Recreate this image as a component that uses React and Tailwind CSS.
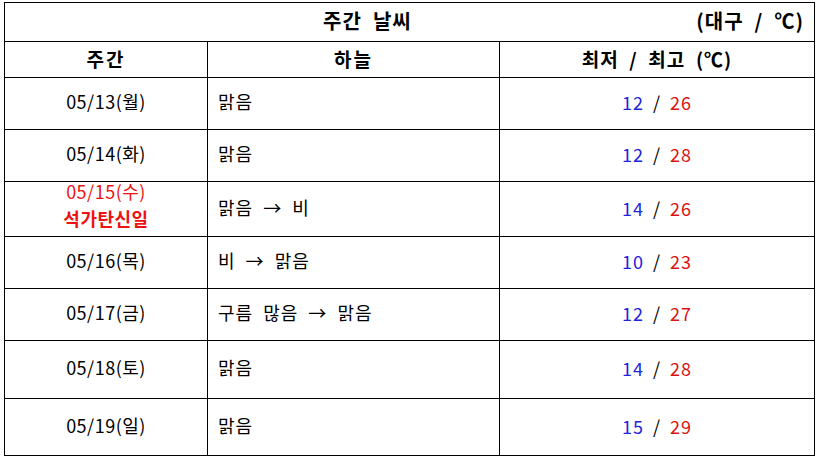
import React from "react";

const rows = [
  { d: "05/13(월)", sky: "맑음", lo: 12, hi: 26, h: "h-[52px]" },
  { d: "05/14(화)", sky: "맑음", lo: 12, hi: 28, h: "h-[52px]" },
  { d: "05/15(수)", sky: "맑음 → 비", lo: 14, hi: 26, h: "h-[55px]", holiday: "석가탄신일" },
  { d: "05/16(목)", sky: "비 → 맑음", lo: 10, hi: 23, h: "h-[52px]" },
  { d: "05/17(금)", sky: "구름  많음 → 맑음", lo: 12, hi: 27, h: "h-[52px]" },
  { d: "05/18(토)", sky: "맑음", lo: 14, hi: 28, h: "h-[58px]" },
  { d: "05/19(일)", sky: "맑음", lo: 15, hi: 29, h: "h-[57px]" },
];

const font = "font-['Noto_Sans_CJK_KR',sans-serif]";

export default function App() {
  return (
    <div className={`w-[821px] h-[463px] bg-white pt-[2px] pl-[4px] text-black ${font}`}>
      <div className="w-[811px] border-l border-t border-black grid grid-cols-[203px_292px_315px]">
        <div className="col-span-3 h-[39px] border-r border-b border-black flex items-center pb-[3px] box-border">
          <span className="ml-[318px] text-[20px] font-bold leading-none whitespace-pre tracking-[1px]">{"주간  날씨"}</span>
          <span className="ml-auto mr-[10px] text-[20px] font-bold leading-none whitespace-pre tracking-[1px]">{"(대구  /  ℃)"}</span>
        </div>
        <div className="h-[36px] border-r border-b border-black flex items-center justify-center pb-[2px] text-[19px] font-bold leading-none tracking-[2px]">주간</div>
        <div className="h-[36px] border-r border-b border-black flex items-center justify-center pb-[2px] text-[19px] font-bold leading-none tracking-[2px]">하늘</div>
        <div className="h-[36px] border-r border-b border-black flex items-center justify-center pb-[2px] text-[19px] font-bold leading-none whitespace-pre tracking-[1px]">{"최저  /  최고  (℃)"}</div>
        {rows.map((r) => (
          <React.Fragment key={r.d}>
            <div className={`${r.h} border-r border-b border-black flex flex-col items-center justify-center ${r.holiday ? "pb-[10px]" : "pb-[5px]"} text-[18px] leading-none tracking-[0.5px]`}>
              {r.holiday ? (
                <>
                  <span className="text-[#ee1111]">{r.d}</span>
                  <span className="text-[#ee1111] font-bold mt-[9px] text-[18px]">{r.holiday}</span>
                </>
              ) : (
                <span>{r.d}</span>
              )}
            </div>
            <div className={`${r.h} border-r border-b border-black flex items-center pl-[10px] pb-[5px] text-[18px] leading-none whitespace-pre tracking-[1px]`}>
              {r.sky.split(" → ").join("  →  ")}
            </div>
            <div className={`${r.h} border-r border-b border-black flex items-center justify-center pb-[3px] text-[18px] leading-none tracking-[1px]`}>
              <span className="text-[#2222dd]">{r.lo}</span>
              <span className="mx-[9px]">/</span>
              <span className="text-[#dd1111]">{r.hi}</span>
            </div>
          </React.Fragment>
        ))}
      </div>
    </div>
  );
}
